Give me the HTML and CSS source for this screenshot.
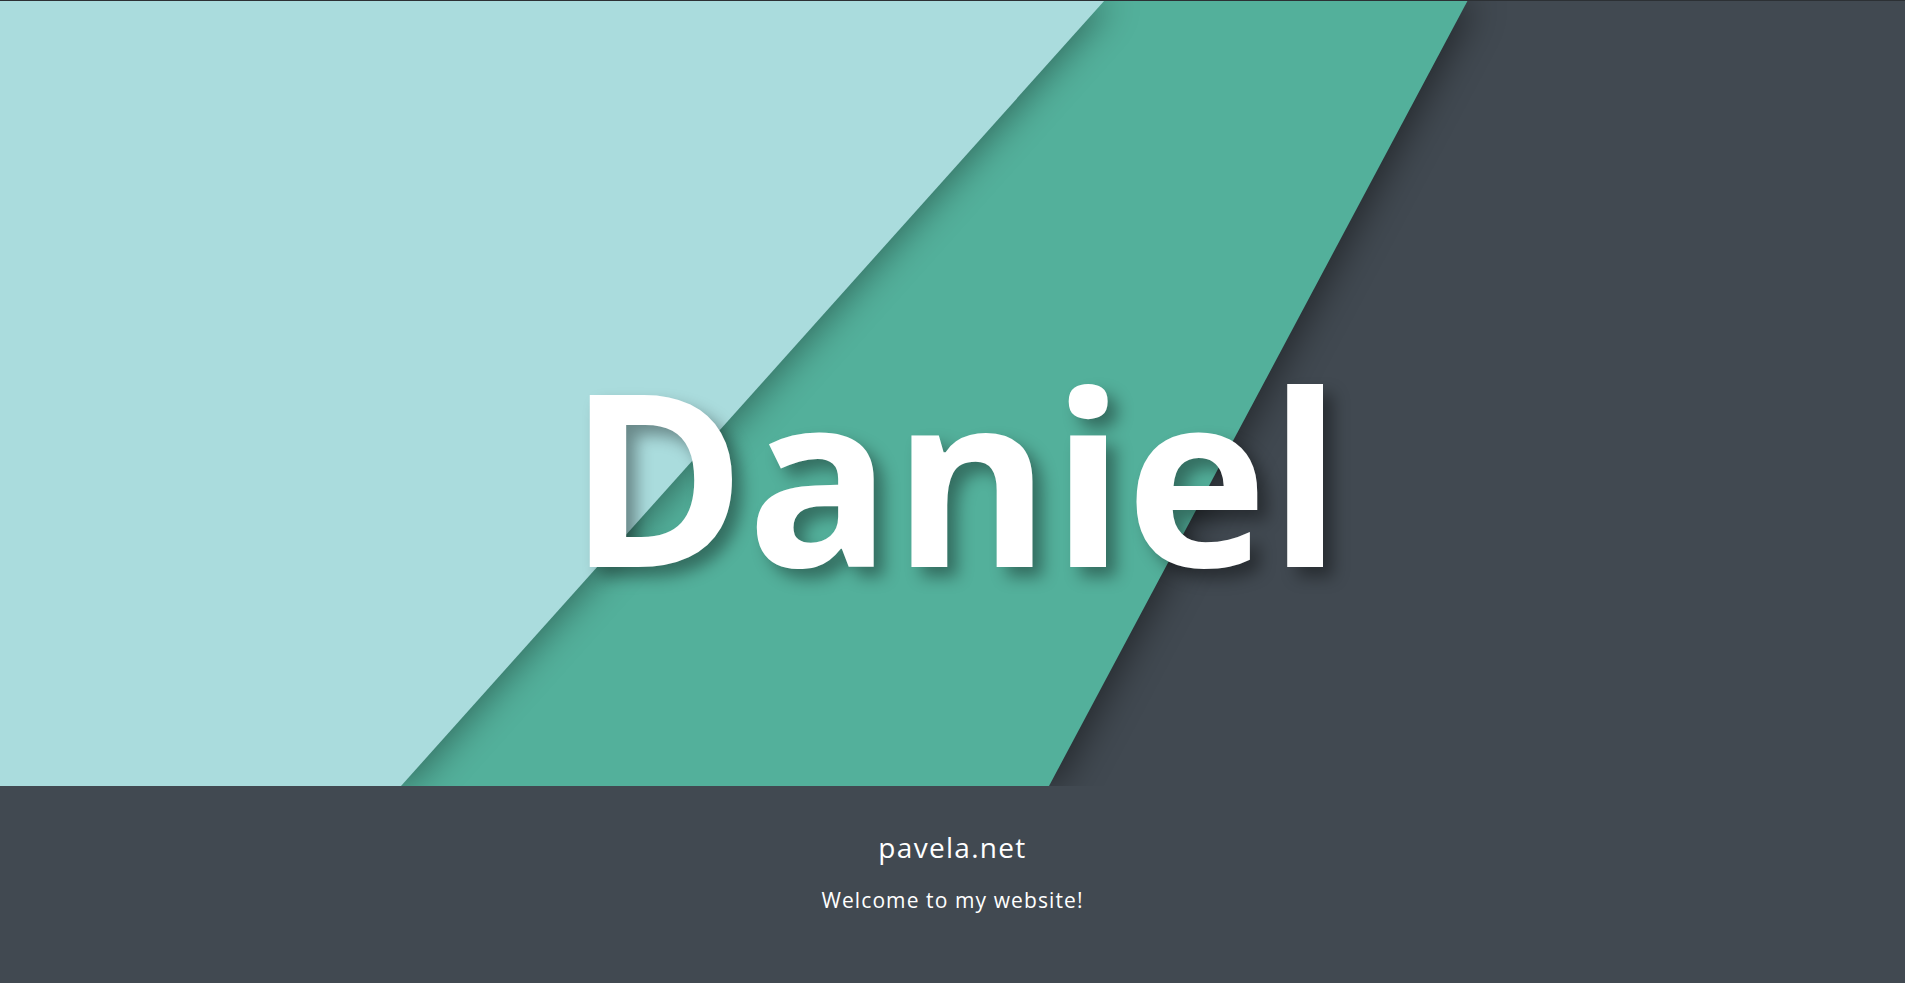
FILE: index.html
```html
<!DOCTYPE html>
<html lang="en">
<head>
<meta charset="utf-8">
<title>pavela.net</title>
<link rel="stylesheet" href="styles.css">
</head>
<body>
<header class="hero">
  <div class="panel panel-green"></div>
  <div class="panel panel-light"></div>
  <h1 class="hero-title">Daniel</h1>
</header>
<footer class="intro">
  <h2 class="intro-site">pavela.net</h2>
  <p class="intro-text">Welcome to my website!</p>
</footer>
</body>
</html>
```
FILE: styles.css
```css
html, body {
  margin: 0;
  padding: 0;
  background: #414951;
}

body {
  font-family: "Open Sans", "Liberation Sans", sans-serif;
  color: #ffffff;
}

.hero {
  position: relative;
  overflow: hidden;
  box-sizing: border-box;
  height: 786px;
  border-top: 1px solid #2c3034;
  background: #414951;
  display: flex;
  justify-content: center;
  padding-top: 353px;
  padding-left: 6px;
}

.panel {
  position: absolute;
  bottom: 0;
  height: 100%;
  left: -1200px;
  transform-origin: 0 100%;
}

.panel-green {
  width: 2249px;
  background: #53b09b;
  transform: skewX(-28.06deg);
  box-shadow: 8px 0 34px rgba(0, 0, 0, 0.45);
}

.panel-light {
  width: 1601px;
  background: #aadcdd;
  transform: skewX(-41.85deg);
  box-shadow: 8px 0 30px rgba(0, 0, 0, 0.38);
}

.hero-title {
  position: relative;
  margin: 0;
  font-family: "Open Sans", "Noto Sans", sans-serif;
  font-weight: 700;
  font-size: 240px;
  line-height: 1;
  letter-spacing: 1px;
  color: #ffffff;
  text-shadow: 10px 10px 16px rgba(0, 0, 0, 0.38);
  align-self: flex-start;
}

.intro {
  display: flex;
  flex-direction: column;
  align-items: center;
  padding-top: 42px;
  height: 197px;
  box-sizing: border-box;
  background: #414951;
}

.intro-site {
  margin: 0;
  font-size: 28px;
  font-weight: 500;
  line-height: 38px;
  letter-spacing: 1.3px;
}

.intro-text {
  margin: 20px 0 0;
  font-size: 21px;
  font-weight: 500;
  line-height: 28px;
  letter-spacing: 1.1px;
}
```
